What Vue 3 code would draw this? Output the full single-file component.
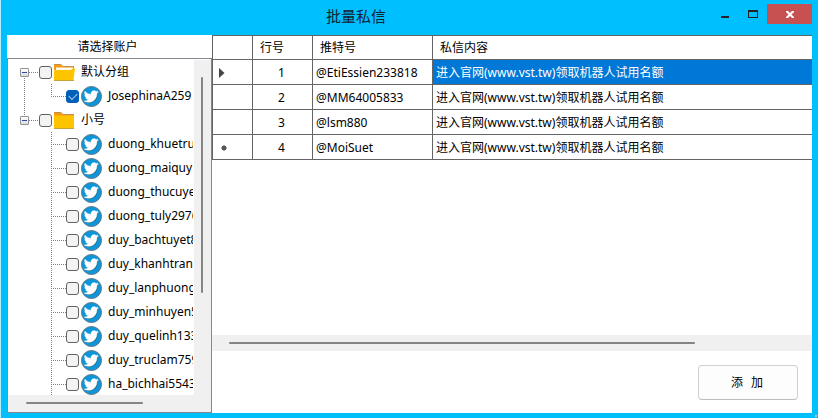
<script setup>
import { ref } from 'vue'

const groups = ref([
  {
    name: '默认分组',
    open: true,
    checked: false,
    accounts: [{ name: 'JosephinaA259', checked: true }],
  },
  {
    name: '小号',
    open: false,
    checked: false,
    accounts: [
      'duong_khuetru',
      'duong_maiquy',
      'duong_thucuye',
      'duong_tuly2976',
      'duy_bachtuyet8',
      'duy_khanhtran',
      'duy_lanphuong',
      'duy_minhuyen5',
      'duy_quelinh133',
      'duy_truclam759',
      'ha_bichhai5543',
    ].map((name) => ({ name, checked: false })),
  },
])

const messages = [
  { id: 1, account: '@EtiEssien233818', marker: 'current' },
  { id: 2, account: '@MM64005833', marker: '' },
  { id: 3, account: '@lsm880', marker: '' },
  { id: 4, account: '@MoiSuet', marker: 'new' },
]
const selected = ref(1)

const bird =
  'M23.953 4.570a10 10 0 01-2.825.775 4.958 4.958 0 002.163-2.723c-.951.555-2.005.959-3.127 1.184a4.920 4.920 0 00-8.384 4.482C7.690 8.095 4.067 6.130 1.640 3.162a4.822 4.822 0 00-.666 2.475c0 1.710.870 3.213 2.188 4.096a4.904 4.904 0 01-2.228-.616v.060a4.923 4.923 0 003.946 4.827 4.996 4.996 0 01-2.212.085 4.936 4.936 0 004.604 3.417 9.867 9.867 0 01-6.102 2.105c-.390 0-.779-.023-1.170-.067a13.995 13.995 0 007.557 2.209c9.053 0 13.998-7.496 13.998-13.985 0-.210 0-.420-.015-.630A9.935 9.935 0 0024 4.590z'
</script>

<template>
  <div class="window">
    <header class="titlebar">
      <h1>批量私信</h1>
      <button type="button" class="control" aria-label="最小化">
        <svg width="10" height="10" viewBox="0 0 10 10"><path d="M1 7h8v2H1z" fill="#222" /></svg>
      </button>
      <button type="button" class="control" aria-label="最大化">
        <svg width="10" height="8" viewBox="0 0 10 8">
          <path d="M0 0h10v8H0zM1 2v5h8V2z" fill="#222" fill-rule="evenodd" />
        </svg>
      </button>
      <button type="button" class="control close" aria-label="关闭">
        <svg width="8" height="7" viewBox="0 0 8 7">
          <path d="M0 0h2l2 2 2-2h2v1L5.500 3.500 8 6v1H6L4 5 2 7H0V6l2.500-2.500L0 1z" fill="#fff" />
        </svg>
      </button>
    </header>

    <main class="body">
      <section class="sidebar">
        <h2>请选择账户</h2>
        <div class="tree">
          <ul class="nodes">
            <li v-for="group in groups" :key="group.name" class="group">
              <label class="row">
                <span class="expander"></span>
                <span class="dots"></span>
                <input v-model="group.checked" type="checkbox" />
                <svg class="folder" width="21" height="17" viewBox="0 0 21 17">
                  <path d="M0 1.500Q0 .5 1 .5H7L9 2.500H20V6H0z" fill="#f79a10" />
                  <path v-if="group.open" d="M2 3.500H19V8H2z" fill="#fffbe8" />
                  <path v-if="group.open" d="M1 6H17L18.500 4.500H21L19.500 16H0V7z" fill="#ffc400" />
                  <path v-else d="M0 3.500H20V16H0z" fill="#ffc400" />
                  <path d="M0 .5H7L9 2.500H20" fill="none" stroke="#c09050" />
                  <path d="M0 16.500H20" stroke="#c9a23a" />
                </svg>
                <span>{{ group.name }}</span>
              </label>
              <ul class="children">
                <li v-for="account in group.accounts" :key="account.name">
                  <label class="row">
                    <span class="dots"></span>
                    <input v-model="account.checked" type="checkbox" />
                    <svg class="bird" width="21" height="21" viewBox="0 0 42 42">
                      <circle cx="21" cy="21" r="20" fill="#0b96dc" stroke="#62757f" stroke-width="2" />
                      <path transform="translate(7.500 8) scale(1.200)" :d="bird" fill="#2b6684" />
                      <path transform="translate(6 6.500) scale(1.200)" :d="bird" fill="#fff" stroke="#fff" stroke-width=".6" />
                    </svg>
                    <span>{{ account.name }}</span>
                  </label>
                </li>
              </ul>
            </li>
          </ul>
          <div class="vbar"><span></span></div>
          <div class="hbar"><span></span></div>
        </div>
      </section>

      <section class="content">
        <div class="grid">
          <table>
            <colgroup>
              <col class="c-marker" />
              <col class="c-id" />
              <col class="c-account" />
              <col />
            </colgroup>
            <thead>
              <tr>
                <th></th>
                <th>行号</th>
                <th>推特号</th>
                <th>私信内容</th>
              </tr>
            </thead>
            <tbody>
              <tr v-for="row in messages" :key="row.id" @click="selected = row.id">
                <td class="marker">
                  <svg v-if="row.marker === 'current'" width="6" height="10" viewBox="0 0 6 10">
                    <path d="M0 0l5.500 5L0 10z" fill="#444" />
                  </svg>
                  <svg v-if="row.marker === 'new'" width="10" height="8" viewBox="0 0 10 8">
                    <circle cx="5" cy="4" r="2" fill="#444" />
                    <path d="M5 1v6M2 4h6M3 2l4 4M7 2l-4 4" stroke="#555" stroke-width="1" />
                  </svg>
                </td>
                <td class="id">{{ row.id }}</td>
                <td>{{ row.account }}</td>
                <td :class="{ selected: selected === row.id }">进入官网(www.vst.tw)领取机器人试用名额</td>
              </tr>
            </tbody>
          </table>
        </div>
        <div class="scroll"><span></span></div>
        <footer>
          <button type="button" class="add"><span>添</span><span>加</span></button>
        </footer>
      </section>
    </main>
    <svg class="grip" width="8" height="8" viewBox="0 0 8 8">
      <path d="M6 0h2v2H6zM3 3h2v2H3zM6 3h2v2H6zM0 6h2v2H0zM3 6h2v2H3zM6 6h2v2H6z" fill="#b8c0c4" />
    </svg>
  </div>
</template>

<style>
body {
  margin: 0;
}
</style>

<style scoped>
* {
  box-sizing: border-box;
}
.window {
  position: relative;
  display: flex;
  flex-direction: column;
  height: 100vh;
  padding: 0 6px 5px;
  border-left: 1px solid #b9ecfb;
  background: #00bfff;
  color: #000;
  font: 12px/16px 'Noto Sans', 'Noto Sans CJK SC', sans-serif;
  overflow: hidden;
}
h1,
h2,
ul {
  margin: 0;
  padding: 0;
  font-weight: 400;
  list-style: none;
}
.titlebar {
  display: flex;
  flex: none;
  align-items: flex-start;
  height: 35px;
  padding-top: 4px;
}
h1 {
  flex: 1;
  padding-right: 6px;
  font-size: 15px;
  line-height: 24px;
  text-align: center;
  color: #123;
}
.control {
  display: flex;
  align-items: center;
  justify-content: center;
  width: 28px;
  height: 20px;
  padding: 0;
  border: 0;
  background: none;
}
.close {
  width: 45px;
  background: #c75050;
}
.body {
  display: flex;
  flex: 1;
  min-height: 0;
}
.sidebar {
  display: flex;
  flex: none;
  flex-direction: column;
  width: 205px;
  background: #fff;
}
h2 {
  flex: none;
  height: 23px;
  padding-right: 4px;
  font-size: 12px;
  line-height: 24px;
  text-align: center;
}
.tree {
  display: grid;
  flex: 1;
  grid-template: minmax(0, 1fr) 17px / minmax(0, 1fr) 17px;
  min-height: 0;
  padding-top: 1px;
  border: 1px solid #828790;
}
.nodes {
  margin-right: 1px;
  overflow: hidden;
  white-space: nowrap;
}
.group {
  background: repeating-linear-gradient(#808080 0 1px, #fff 1px 2px) 16px 12px / 1px 100% no-repeat;
}
.group:last-child {
  background-position: 16px 0;
  background-size: 1px 12px;
}
.row {
  display: flex;
  align-items: center;
  height: 24px;
}
.group > .row {
  padding-left: 12px;
}
.expander {
  display: flex;
  flex: none;
  align-items: center;
  justify-content: center;
  width: 9px;
  height: 9px;
  border: 1px solid #919191;
  border-radius: 1px;
  background: linear-gradient(#fff, #ddd);
}
.expander::before {
  width: 5px;
  height: 1px;
  background: #2b4a9c;
  content: '';
}
.dots {
  flex: none;
  width: 10px;
  height: 1px;
  background: repeating-linear-gradient(90deg, #808080 0 1px, #fff 1px 2px);
}
.children {
  margin-left: 43px;
}
.children li {
  background: repeating-linear-gradient(#808080 0 1px, #fff 1px 2px) 0 0 / 1px 100% no-repeat;
}
.group:first-child .children li:last-child {
  background-size: 1px 12px;
}
.children .dots {
  width: 15px;
}
input {
  display: flex;
  flex: none;
  align-items: center;
  justify-content: center;
  width: 13px;
  height: 13px;
  margin: 0;
  border: 1px solid #626262;
  border-radius: 3px;
  background: #f3f3f3;
  appearance: none;
}
input:checked {
  border-color: #005fb8;
  background: #005fb8;
}
input:checked::before {
  width: 7px;
  height: 4px;
  margin-bottom: 2px;
  border: solid #b5cfe9;
  border-width: 0 0 1px 1px;
  transform: rotate(-45deg);
  content: '';
}
.folder,
.bird {
  flex: none;
  margin: 0 6px 0 2px;
}
.vbar,
.hbar,
.scroll {
  background: #f0f0f0;
}
.vbar {
  padding: 17px 7px 0;
}
.hbar {
  grid-column: 1 / -1;
  padding: 7px 0 0 18px;
}
.vbar span,
.hbar span,
.scroll span {
  display: block;
  border-radius: 1px;
  background: #858585;
}
.vbar span {
  width: 2px;
  height: 68%;
}
.hbar span {
  width: 63%;
  height: 2px;
}
.content {
  display: flex;
  flex: 1;
  flex-direction: column;
  min-width: 0;
  background: #fff;
}
.grid {
  flex: 1;
  min-height: 0;
  overflow: hidden;
}
table {
  width: 100%;
  border-collapse: separate;
  border-spacing: 0;
  border-top: 1px solid #646464;
  border-left: 1px solid #646464;
  table-layout: fixed;
}
.c-marker {
  width: 40px;
}
.c-id {
  width: 60px;
}
.c-account {
  width: 120px;
}
th,
td {
  height: 25px;
  padding: 2px 3px 0;
  border-right: 1px solid #646464;
  border-bottom: 1px solid #646464;
  font-weight: 400;
  text-align: left;
  white-space: nowrap;
}
th {
  height: 24px;
  padding: 0 7px;
}
th:last-child,
td:last-child {
  border-right: 0;
}
.marker {
  padding-left: 6px;
}
.marker svg {
  display: block;
}
td.id {
  padding: 2px 2px 0 0;
  text-align: center;
}
.selected {
  background: #0078d7;
  color: #fff;
}
.scroll {
  flex: none;
  height: 16px;
  padding: 7px 0 0 17px;
}
.scroll span {
  width: 80%;
  height: 2px;
}
footer {
  display: flex;
  flex: none;
  justify-content: flex-end;
  padding: 14px 14px 13px;
}
.add {
  display: flex;
  align-items: center;
  justify-content: center;
  gap: 8px;
  width: 100px;
  height: 35px;
  padding: 0 2px 0 0;
  border: 1px solid #d0d0d0;
  border-bottom-color: #bbb;
  border-radius: 4px;
  background: #fdfdfd;
  color: #000;
  font: inherit;
}
.grip {
  position: absolute;
  right: -2px;
  bottom: -2px;
}
</style>
